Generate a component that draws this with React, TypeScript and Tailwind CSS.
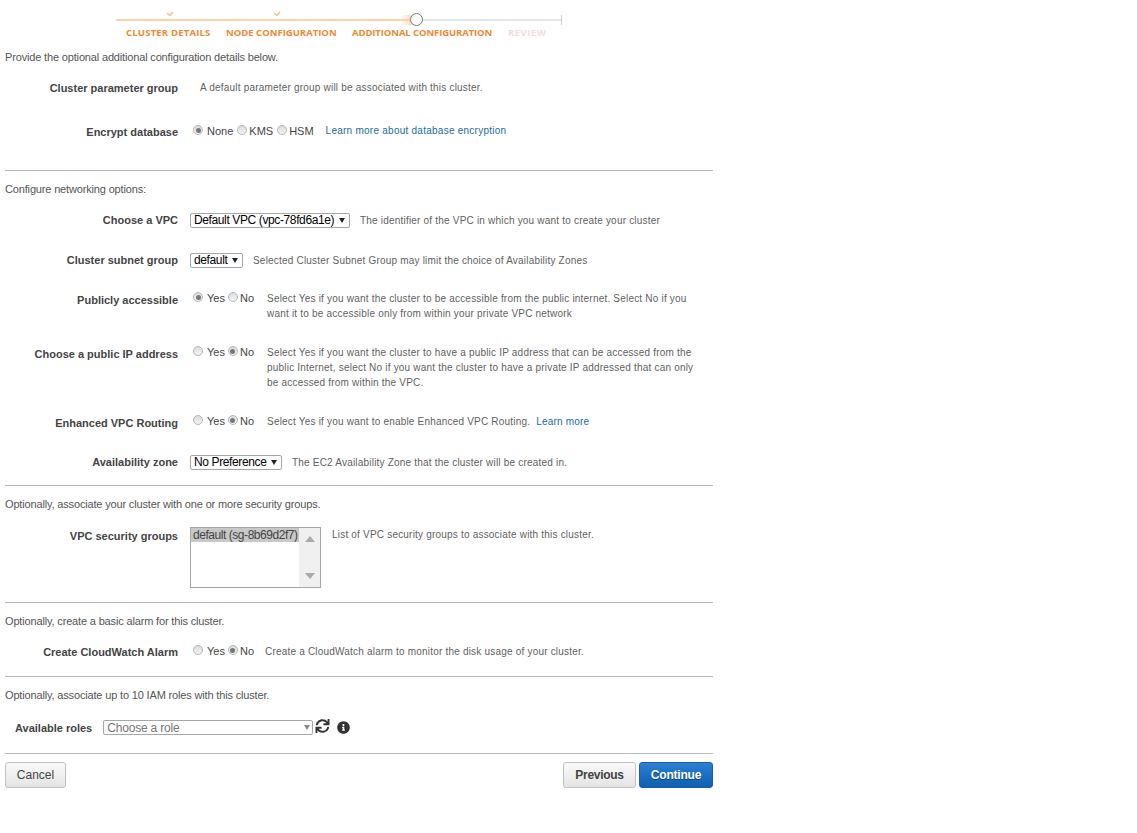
import { FaInfoCircle, FaSync } from "react-icons/fa";

function Radio({ checked }: { checked?: boolean }) {
  return (
    <span className="flex h-[10px] w-[10px] shrink-0 items-center justify-center rounded-full border border-[#b5b5b5] bg-gradient-to-b from-[#dcdcdc] to-[#f5f5f5]">
      {checked && <span className="h-[5px] w-[5px] rounded-full bg-[#777]" />}
    </span>
  );
}

function RadioGroup({ options, selected, className }: { options: string[]; selected: string; className?: string }) {
  return (
    <div className={`flex items-center text-[11px] leading-[14px] whitespace-nowrap text-[#444] ${className ?? "gap-[3px]"}`}>
      {options.map((o, i) => (
        <label key={o} className={`flex items-center ${i === 0 ? "gap-[4px]" : "gap-[2px]"}`}>
          <span className="-mt-[2px]">
            <Radio checked={o === selected} />
          </span>
          {o}
        </label>
      ))}
    </div>
  );
}

function Hint({ children, className }: { children: React.ReactNode; className?: string }) {
  return <p className={`text-[10px] leading-[15px] tracking-[0.2px] text-[#5f5f5f] ${className ?? ""}`}>{children}</p>;
}

function Row({
  label,
  className,
  children,
}: {
  label: string;
  className?: string;
  children: React.ReactNode;
}) {
  return (
    <div className={`flex items-start ${className ?? ""}`}>
      <div className="w-[173px] shrink-0 text-right text-[11px] leading-[14px] font-bold text-[#444]">
        {label}
      </div>
      <div className="ml-[19px] flex items-start">{children}</div>
    </div>
  );
}

function Dropdown({ value, width }: { value: string; width: string }) {
  return (
    <div className={`relative h-[15px] shrink-0 ${width}`}>
      <select className="block h-full w-full appearance-none rounded-[2px] border border-[#a6a6a6] bg-white pl-[3px] text-[12px] leading-[13px] tracking-[-0.38px] text-black">
        <option>{value}</option>
      </select>
      <span className="absolute top-[5px] right-[5px] h-0 w-0 border-x-[3px] border-t-[5px] border-x-transparent border-t-[#222]" />
    </div>
  );
}

function Section({ children, className }: { children: React.ReactNode; className?: string }) {
  return <p className={`text-[11px] leading-[14px] tracking-[-0.16px] text-[#555] ${className ?? ""}`}>{children}</p>;
}

function Divider({ className }: { className?: string }) {
  return <hr className={`border-t border-[#bbb] ${className ?? ""}`} />;
}

function Stepper() {
  return (
    <div className="ml-[116px] w-[446px] pt-[12px]">
      <div className="relative h-[9px]">
        <svg className="absolute -top-[1px] left-[50px]" width="8" height="6" viewBox="0 0 8 6">
          <path d="M1 2 L4 4.5 L7 1" fill="none" stroke="#f3c38f" strokeWidth="1.6" />
        </svg>
        <svg className="absolute -top-[1px] left-[157px]" width="8" height="6" viewBox="0 0 8 6">
          <path d="M1 2 L4 4.5 L7 1" fill="none" stroke="#f3c38f" strokeWidth="1.6" />
        </svg>
        <div className="absolute top-[7px] left-0 h-[2px] w-[300px] bg-[#f9d5ae]" />
        <div className="absolute top-[3px] left-[284px] h-[10px] w-[16px] bg-gradient-to-r from-transparent to-[#fbcd9c]" />
        <div className="absolute top-[7px] left-[300px] h-[2px] w-[145px] bg-[#e6e6e6]" />
        <div className="absolute top-[3px] left-[445px] h-[10px] w-px bg-[#ccc]" />
        <div className="absolute top-[1px] left-[294px] h-[13px] w-[13px] rounded-full border-[1.5px] border-[#777] bg-white" />
      </div>
      <div className="mt-[6px] ml-[10px] flex text-[9.5px] leading-[12px] font-bold whitespace-nowrap text-[#ec8a33] [font-family:'Open_Sans',sans-serif]">
        <span className="w-[100px] tracking-[0.2px]">CLUSTER DETAILS</span>
        <span className="w-[126px]">NODE CONFIGURATION</span>
        <span className="w-[156px] tracking-[-0.1px]">ADDITIONAL CONFIGURATION</span>
        <span className="tracking-[0.5px] text-[#f3dcd8]">REVIEW</span>
      </div>
    </div>
  );
}

export default function App() {
  return (
    <div className="min-h-[833px] w-[1137px] bg-white [font-family:'Liberation_Sans',Arial,sans-serif]">
      <Stepper />
      <div className="w-[713px] pl-[5px]">
        <Section className="mt-[11px]">Provide the optional additional configuration details below.</Section>

        <Row label="Cluster parameter group" className="mt-[17px]">
          <Hint className="ml-[3px] -mt-[1px]">A default parameter group will be associated with this cluster.</Hint>
        </Row>
        <Row label="Encrypt database" className="mt-[30px]">
          <div className="-ml-[4px] flex items-center -mt-[1px]">
            <RadioGroup options={["None", "KMS", "HSM"]} selected="None" className="gap-[4px]" />
            <Hint className="ml-[12px] -mt-[1px] tracking-[0.25px]">
              <a href="#" className="text-[#1a6ca0]">Learn more about database encryption</a>
            </Hint>
          </div>
        </Row>
        <Divider className="mt-[31px]" />

        <Section className="mt-[11px]">Configure networking options:</Section>
        <Row label="Choose a VPC" className="mt-[17px]">
          <div className="-ml-[7px] flex items-center">
            <Dropdown value="Default VPC (vpc-78fd6a1e)" width="w-[160px]" />
            <Hint className="ml-[10px] -mt-[1px]">The identifier of the VPC in which you want to create your cluster</Hint>
          </div>
        </Row>
        <Row label="Cluster subnet group" className="mt-[25px]">
          <div className="-ml-[7px] flex items-center">
            <Dropdown value="default" width="w-[53px]" />
            <Hint className="ml-[10px] -mt-[1px]">Selected Cluster Subnet Group may limit the choice of Availability Zones</Hint>
          </div>
        </Row>
        <Row label="Publicly accessible" className="mt-[25px]">
          <div className="-ml-[4px] flex items-start -mt-[2px]">
            <RadioGroup options={["Yes", "No"]} selected="Yes" />
            <Hint className="ml-[13px] w-[432px]">
              Select Yes if you want the cluster to be accessible from the public internet. Select No if you want it to be accessible only from within your private VPC network
            </Hint>
          </div>
        </Row>
        <Row label="Choose a public IP address" className="mt-[26px]">
          <div className="-ml-[4px] flex items-start -mt-[2px]">
            <RadioGroup options={["Yes", "No"]} selected="No" />
            <Hint className="ml-[13px] w-[432px]">
              Select Yes if you want the cluster to have a public IP address that can be accessed from the public Internet, select No if you want the cluster to have a private IP addressed that can only be accessed from within the VPC.
            </Hint>
          </div>
        </Row>
        <Row label="Enhanced VPC Routing" className="mt-[26px]">
          <div className="-ml-[4px] flex items-start -mt-[2px]">
            <RadioGroup options={["Yes", "No"]} selected="No" />
            <Hint className="ml-[13px]">
              Select Yes if you want to enable Enhanced VPC Routing. <a href="#" className="ml-[3px] text-[#1a6ca0]">Learn more</a>
            </Hint>
          </div>
        </Row>
        <Row label="Availability zone" className="mt-[25px]">
          <div className="-ml-[7px] flex items-center">
            <Dropdown value="No Preference" width="w-[92px]" />
            <Hint className="ml-[10px] -mt-[1px]">The EC2 Availability Zone that the cluster will be created in.</Hint>
          </div>
        </Row>
        <Divider className="mt-[15px]" />

        <Section className="mt-[11px]">Optionally, associate your cluster with one or more security groups.</Section>
        <Row label="VPC security groups" className="mt-[18px]">
          <div className="-ml-[7px] -mt-[2px] flex items-start">
            <div className="flex h-[61px] w-[131px] shrink-0 border border-[#a6a6a6]">
              <div className="min-w-0 flex-1">
                <div className="bg-[#c8c8c8] pl-[2px] text-[12px] leading-[14px] tracking-[-0.45px] whitespace-nowrap text-[#444]">default (sg-8b69d2f7)</div>
              </div>
              <div className="flex w-[21px] shrink-0 flex-col items-center justify-between bg-[#f0f0f0] py-[8px]">
                <span className="h-0 w-0 border-x-[5px] border-b-[6px] border-x-transparent border-b-[#aaa]" />
                <span className="h-0 w-0 border-x-[5px] border-t-[6px] border-x-transparent border-t-[#aaa]" />
              </div>
            </div>
            <Hint className="ml-[11px]">List of VPC security groups to associate with this cluster.</Hint>
          </div>
        </Row>
        <Divider className="mt-[14px]" />

        <Section className="mt-[11px]">Optionally, create a basic alarm for this cluster.</Section>
        <Row label="Create CloudWatch Alarm" className="mt-[17px]">
          <div className="-ml-[4px] flex items-start -mt-[1px]">
            <RadioGroup options={["Yes", "No"]} selected="No" />
            <Hint className="ml-[11px]">Create a CloudWatch alarm to monitor the disk usage of your cluster.</Hint>
          </div>
        </Row>
        <Divider className="mt-[17px]" />

        <Section className="mt-[11px]">Optionally, associate up to 10 IAM roles with this cluster.</Section>
        <div className="mt-[18px] flex items-center">
          <span className="ml-[10px] text-[11px] leading-[14px] font-bold text-[#444]">Available roles</span>
          <div className="relative ml-[11px] h-[15px] w-[210px]">
            <select className="block h-full w-full appearance-none rounded-[2px] border border-[#a6a6a6] bg-white pt-[1px] pl-[3px] text-[12px] leading-[13px] tracking-[-0.2px] text-[#777]">
              <option>Choose a role</option>
            </select>
            <span className="absolute top-[5px] right-[3px] h-0 w-0 border-x-[3px] border-t-[5px] border-x-transparent border-t-[#888]" />
          </div>
          <FaSync className="-mt-[4px] ml-[2px] h-[14px] w-[15px] text-[#333]" />
          <FaInfoCircle className="ml-[7px] h-[13px] w-[13px] text-[#333]" />
        </div>
        <Divider className="mt-[18px]" />

        <div className="mt-[8px] flex justify-between">
          <button className="h-[26px] w-[61px] rounded-[3px] border border-[#c0c0c0] bg-gradient-to-b from-[#fafafa] to-[#e4e4e4] text-[12px] text-[#444]">
            Cancel
          </button>
          <div className="flex gap-[3px]">
            <button className="h-[26px] w-[73px] rounded-[3px] border border-[#c0c0c0] bg-gradient-to-b from-[#fafafa] to-[#e4e4e4] text-[12px] font-bold tracking-[-0.3px] text-[#444]">
              Previous
            </button>
            <button className="h-[26px] w-[74px] rounded-[3px] border border-[#1b5fa8] bg-gradient-to-b from-[#2a80d2] to-[#0f5eb0] text-[12px] font-bold tracking-[-0.2px] text-white [text-shadow:0_1px_1px_rgba(0,0,0,0.4)]">
              Continue
            </button>
          </div>
        </div>
      </div>
    </div>
  );
}
